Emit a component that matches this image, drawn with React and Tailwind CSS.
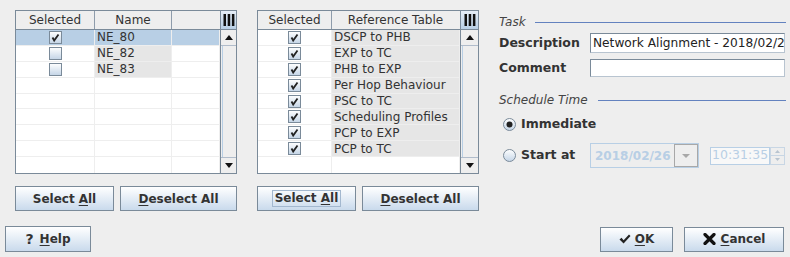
import React from 'react';

const Check = ({ checked }) => (
  <svg width="13" height="13" viewBox="0 0 13 13">
    <defs>
      <linearGradient id="cbg" x1="0" y1="0" x2="0" y2="1">
        <stop offset="0" stopColor="#ffffff" />
        <stop offset="1" stopColor="#c3d4e6" />
      </linearGradient>
    </defs>
    <rect x="0.5" y="0.5" width="12" height="12" fill="url(#cbg)" stroke="#7a8a99" />
    {checked && <path d="M3.5 6.5 L5.2 9.5 L9.5 3.5" fill="none" stroke="#222" strokeWidth="1.8" strokeLinejoin="miter" />}
  </svg>
);

const Radio = ({ on }) => (
  <svg width="13" height="13" viewBox="0 0 13 13">
    <defs>
      <linearGradient id="rbg" x1="0" y1="0" x2="0" y2="1">
        <stop offset="0" stopColor="#ffffff" />
        <stop offset="1" stopColor="#c3d4e6" />
      </linearGradient>
    </defs>
    <circle cx="6.5" cy="6.5" r="6" fill="url(#rbg)" stroke="#7a8a99" />
    {on && <circle cx="6.5" cy="6.5" r="3" fill="#222" />}
  </svg>
);

const Corner = () => (
  <div className="h-[19px] border-b border-[#7a8a99] bg-gradient-to-b from-[#e6eef7] to-[#b8cfe5] flex items-center justify-center">
    <svg width="12" height="12" viewBox="0 0 12 12">
      <rect x="0.5" y="0" width="2.5" height="12" fill="#111" />
      <rect x="4.7" y="0" width="2.5" height="12" fill="#111" />
      <rect x="8.9" y="0" width="2.5" height="12" fill="#111" />
    </svg>
  </div>
);

const ScrollBar = () => (
  <div className="flex-1 flex flex-col border-l border-[#7a8a99] bg-[#eeeeee]">
    <div className="h-[16px] border-b border-[#b0bccb] flex items-center justify-center bg-[#eeeeee]">
      <svg width="8" height="5" viewBox="0 0 8 5"><path d="M0 5 L4 0 L8 5 Z" fill="#111" /></svg>
    </div>
    <div className="flex-1 border-l border-[#b8cfe5] ml-[1px]" />
    <div className="h-[16px] border-t border-[#b0bccb] flex items-center justify-center bg-[#eeeeee]">
      <svg width="8" height="5" viewBox="0 0 8 5"><path d="M0 0 L4 5 L8 0 Z" fill="#111" /></svg>
    </div>
  </div>
);

function Table({ cols, rows, scrollW }) {
  const empty = 9 - rows.length;
  return (
    <div className="w-[222px] h-[164px] border border-[#7a8a99] bg-white flex">
      <div className="flex-1 flex flex-col">
        <div className="h-[19px] flex border-b border-[#7a8a99] bg-[#eeeeee]">
          {cols.map((c, i) => (
            <div key={i} style={{ width: c.w }} className={`h-full flex items-center justify-center border-r ${i === cols.length - 1 ? 'border-transparent' : 'border-[#8e9cab]'} text-[#333]`}>
              {c.label}
            </div>
          ))}
        </div>
        {rows.map((r, ri) => (
          <div key={ri} className="h-[16px] flex">
            {cols.map((c, i) => {
              const bg = r.active ? 'bg-[#b8cfe5]' : c.grey ? 'bg-[#e6e6e6]' : 'bg-white';
              return (
                <div key={i} style={{ width: c.w }} className={`h-full ${bg} border-r border-b border-[#eeeeee] flex items-center ${c.type === 'check' ? 'justify-center' : 'pl-[2px]'} text-[#333] leading-none`}>
                  {c.type === 'check' ? <Check checked={r.sel} /> : c.type === 'text' ? r.name : null}
                </div>
              );
            })}
          </div>
        ))}
        {Array.from({ length: empty }).map((_, ri) => (
          <div key={'e' + ri} className="h-[16px] flex">
            {cols.map((c, i) => (
              <div key={i} style={{ width: c.w }} className={`h-full bg-white border-r ${ri === empty - 1 ? 'border-b-0' : 'border-b'} border-[#eeeeee]`} />
            ))}
          </div>
        ))}
      </div>
      <div className="flex flex-col" style={{ width: scrollW }}>
        <div className="border-l border-[#7a8a99]"><Corner /></div>
        <ScrollBar />
      </div>
    </div>
  );
}

const Btn = ({ w, h = 25, children }) => (
  <div style={{ width: w, height: h }} className="border border-[#7a8a99] bg-gradient-to-b from-white to-[#c9daec] flex items-center justify-center font-bold text-[#333] text-[12px]">
    {children}
  </div>
);

export default function App() {
  const rows1 = [
    { sel: true, name: 'NE_80', active: true },
    { sel: false, name: 'NE_82' },
    { sel: false, name: 'NE_83' },
  ];
  const names2 = ['DSCP to PHB', 'EXP to TC', 'PHB to EXP', 'Per Hop Behaviour', 'PSC to TC', 'Scheduling Profiles', 'PCP to EXP', 'PCP to TC'];
  const rows2 = names2.map((n) => ({ sel: true, name: n }));

  return (
    <div className="w-[790px] h-[257px] bg-[#eeeeee] font-['DejaVu_Sans',sans-serif] text-[12px] text-[#333] flex flex-col overflow-hidden">
      <div className="flex pt-[10px]">
        <div className="ml-[15px] flex flex-col">
          <Table
            scrollW={16}
            cols={[
              { label: 'Selected', w: 79, type: 'check' },
              { label: 'Name', w: 77, type: 'text', grey: true },
              { label: '', w: 48, type: 'blank' },
            ]}
            rows={rows1}
          />
          <div className="flex mt-[12px] gap-[6px]">
            <Btn w={99}>Select <u className="underline-offset-2 ml-[4px]">A</u>ll</Btn>
            <Btn w={117}><u className="underline-offset-2">D</u>eselect All</Btn>
          </div>
        </div>

        <div className="ml-[20px] flex flex-col">
          <Table
            scrollW={18}
            cols={[
              { label: 'Selected', w: 74, type: 'check' },
              { label: 'Reference Table', w: 128, type: 'text', grey: true },
            ]}
            rows={rows2}
          />
          <div className="flex mt-[12px] gap-[6px]">
            <Btn w={99}>
              <span className="border border-[#a3b8cf] px-[2px] leading-[15px]">Select <u className="underline-offset-2">A</u>ll</span>
            </Btn>
            <Btn w={117}><u className="underline-offset-2">D</u>eselect All</Btn>
          </div>
        </div>

        <div className="ml-[20px] w-[287px] flex flex-col">
          <div className="mt-[5px] h-[14px] flex items-center">
            <span className="italic text-[#444]">Task</span>
            <div className="ml-[9px] flex-1 h-px bg-[#6382bf]" />
          </div>
          <div className="mt-[4px] h-[20px] flex items-center">
            <div className="w-[91px] font-bold text-[12.5px]">Description</div>
            <div className="w-[195px] h-[20px] border border-[#7a8a99] border-r-[#b8c4d0] border-b-[#b8c4d0] bg-white overflow-hidden whitespace-nowrap pl-[2px] flex items-center text-[#222] text-[12.2px]">
              Network Alignment - 2018/02/2
            </div>
          </div>
          <div className="mt-[6px] h-[18px] flex items-center">
            <div className="w-[91px] font-bold text-[12.5px]">Comment</div>
            <div className="w-[195px] h-[18px] border border-[#7a8a99] border-r-[#b8c4d0] border-b-[#b8c4d0] bg-white" />
          </div>
          <div className="mt-[16px] h-[14px] flex items-center">
            <span className="italic text-[#444]">Schedule Time</span>
            <div className="ml-[10px] flex-1 h-px bg-[#6382bf]" />
          </div>
          <div className="mt-[9px] h-[16px] flex items-center">
            <div className="ml-[4px] flex"><Radio on /></div>
            <span className="ml-[5px] font-bold text-[12.5px]">Immediate</span>
          </div>
          <div className="mt-[11px] h-[25px] flex items-center">
            <div className="w-[91px] flex items-center">
              <div className="ml-[4px] flex"><Radio /></div>
              <span className="ml-[5px] font-bold text-[12.5px]">Start at</span>
            </div>
            <div className="w-[109px] h-[25px] border border-[#b8cfe5] bg-[#eeeeee] flex items-center">
              <span className="ml-[4px] font-bold text-[#b8cfe5] flex-1">2018/02/26</span>
              <div className="w-[24px] h-[23px] border border-[#a8a8a8] flex items-center justify-center">
                <svg width="8" height="4" viewBox="0 0 8 4"><path d="M0 0 L4 4 L8 0 Z" fill="#a8a8a8" /></svg>
              </div>
            </div>
            <div className="ml-[11px] w-[75px] h-[18px] flex">
              <div className="w-[60px] h-full border border-[#b8cfe5] bg-[#f8f8f8] flex items-center pl-[1px] text-[#b8cfe5] text-[12.5px]">10:31:35</div>
              <div className="w-[15px] h-full flex flex-col">
                <div className="flex-1 border border-[#c8d6e4] flex items-center justify-center">
                  <svg width="5" height="3" viewBox="0 0 5 3"><path d="M0 3 L2.5 0 L5 3 Z" fill="#b8c4d0" /></svg>
                </div>
                <div className="flex-1 border border-t-0 border-[#c8d6e4] flex items-center justify-center">
                  <svg width="5" height="3" viewBox="0 0 5 3"><path d="M0 0 L2.5 3 L5 0 Z" fill="#b8c4d0" /></svg>
                </div>
              </div>
            </div>
          </div>
        </div>
      </div>

      <div className="flex mt-[15px] items-center">
        <div className="ml-[5px]">
          <Btn w={86} h={26}><span className="text-[14px]">?</span><u className="underline-offset-2 ml-[6px]">H</u>elp</Btn>
        </div>
        <div className="flex-1" />
        <Btn w={73} h={25}>
          <svg width="12" height="10" viewBox="0 0 12 10" className="mr-[4px]">
            <path d="M0.5 5.5 L2.5 3.8 L4.6 6.2 L10 0.5 L11.5 1.9 L4.6 9.5 Z" fill="#222" />
          </svg>
          <u className="underline-offset-2">O</u>K
        </Btn>
        <div className="w-[11px]" />
        <Btn w={100} h={25}>
          <svg width="13" height="12" viewBox="0 0 13 12" className="mr-[5px]">
            <path d="M2 1.5 L11 10.5 M11 1.5 L2 10.5" stroke="#111" strokeWidth="3.2" strokeLinecap="round" />
          </svg>
          <u className="underline-offset-2">C</u>ancel
        </Btn>
        <div className="w-[6px]" />
      </div>
    </div>
  );
}
